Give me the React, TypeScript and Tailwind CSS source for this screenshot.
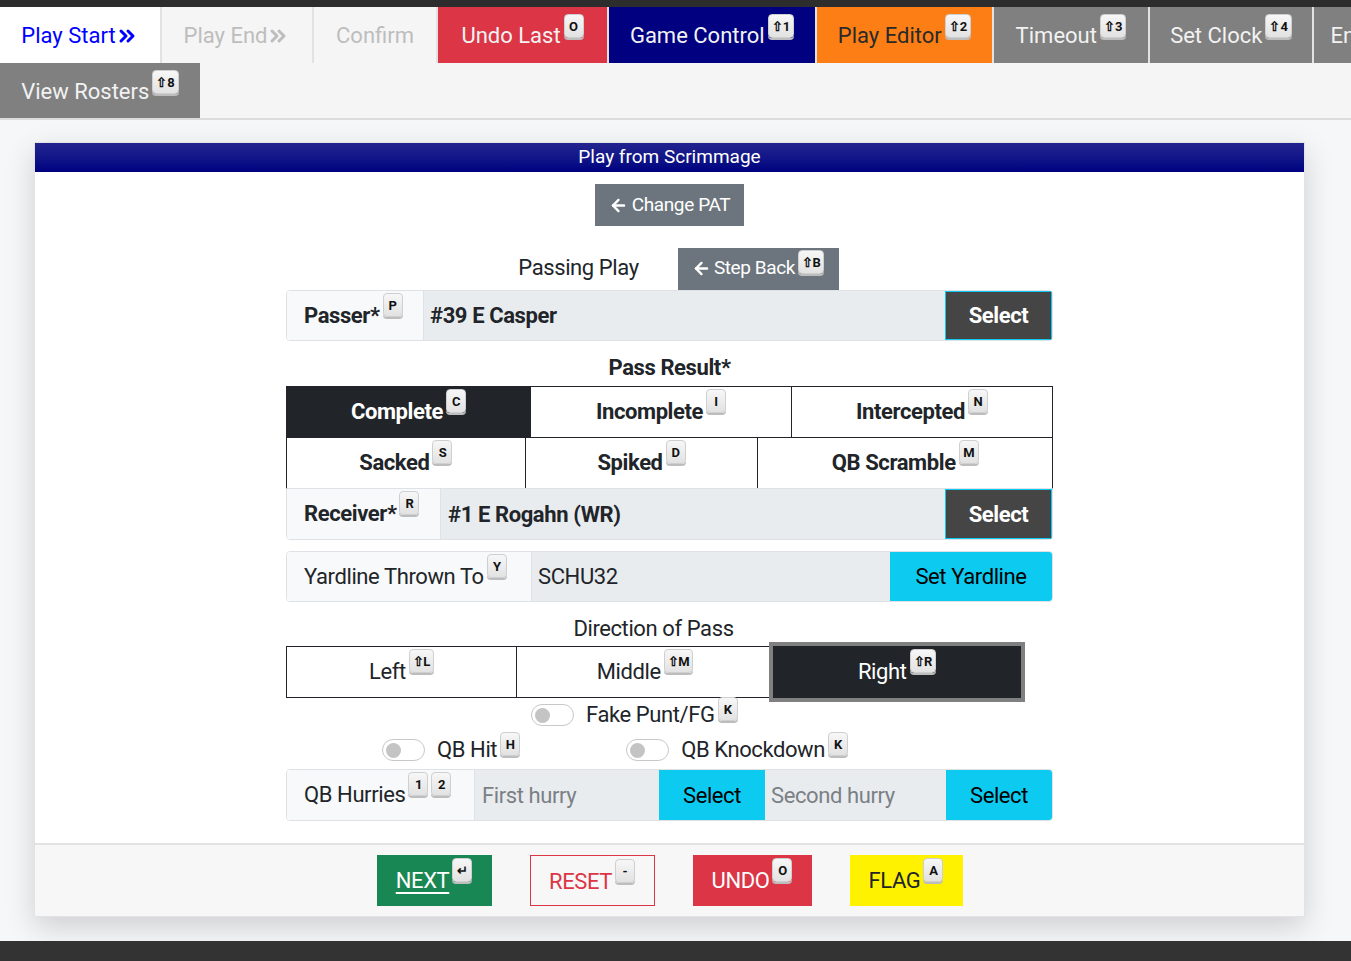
import React from 'react';
import { ChevronsRight, ArrowLeft } from 'lucide-react';

const Kbd: React.FC<{ k: string; className?: string }> = ({ k, className = '' }) => (
    <kbd className={`inline-flex items-center justify-center min-w-[20px] h-[24px] px-[3px] ml-[3px] rounded-[4px] border border-[#cfcfcf] bg-gradient-to-b from-[#f7f7f7] to-[#e2e2e2] shadow-[0_2px_0_#bdbdbd] text-[#111] text-[13px] leading-none font-bold font-['Roboto',sans-serif] align-top ${className}`}>
        {k}
    </kbd>
);

const TABS = [
    { label: 'Play Start', w: 'w-[162px]', bg: 'bg-white', tc: 'text-[#0000ff]', chev: true },
    { label: 'Play End', w: 'w-[152px]', bg: 'bg-[#f5f5f5]', tc: 'text-[#bdbdbd]', chev: true },
    { label: 'Confirm', w: 'w-[124px]', bg: 'bg-[#f5f5f5]', tc: 'text-[#bdbdbd]' },
    { label: 'Undo Last', w: 'w-[171px]', bg: 'bg-[#dc3545]', tc: 'text-[#f2f2f2]', k: 'O' },
    { label: 'Game Control', w: 'w-[208px]', bg: 'bg-[#000080]', tc: 'text-[#f2f2f2]', k: '⇧1' },
    { label: 'Play Editor', w: 'w-[177px]', bg: 'bg-[#fd7e14]', tc: 'text-[#2a2a2a]', k: '⇧2' },
    { label: 'Timeout', w: 'w-[156px]', bg: 'bg-[#808080]', tc: 'text-[#f2f2f2]', k: '⇧3' },
    { label: 'Set Clock', w: 'w-[164px]', bg: 'bg-[#808080]', tc: 'text-[#f2f2f2]', k: '⇧4' },
    { label: 'End Period', w: 'w-[170px]', bg: 'bg-[#808080]', tc: 'text-[#f2f2f2]', k: '⇧5' },
];

const Toggle: React.FC<{ label: string; k: string }> = ({ label, k }) => (
    <div className="flex items-center">
        <span className="w-[43px] h-[22px] rounded-full border border-[#c8c8c8] bg-white flex items-center px-[3px] mr-[12px]">
            <span className="w-[15px] h-[15px] rounded-full bg-[#c4c4c4]" />
        </span>
        <span className="text-[22px] leading-[26px] text-[#212529]">{label}</span>
        <Kbd k={k} className="-mt-[12px]" />
    </div>
);

const App: React.FC = () => {
    return (
        <div className="min-h-[961px] flex flex-col bg-[#f6f7f9] font-['Roboto',sans-serif]">
            <div className="h-[7px] bg-[#2d2d2d]" />

            {/* top nav */}
            <div className="bg-[#f5f5f5] border-b-2 border-[#dcdcdc]">
                <div className="flex overflow-hidden h-[56px]">
                    {TABS.map(t => (
                        <div key={t.label} className={`${t.w} ${t.bg} shrink-0 h-[56px] flex items-start justify-center pt-[6px] border-r-2 border-[#e2e2e2] text-[22px]`}>
                            <span className={`${t.tc} mt-[10px] leading-[26px] flex items-center whitespace-nowrap`}>
                                {t.label}
                                {t.chev && <ChevronsRight size={24} strokeWidth={3} className="-ml-[1px]" />}
                            </span>
                            {t.k && <Kbd k={t.k} className="mt-[1px]" />}
                        </div>
                    ))}
                </div>
                <div className="flex h-[55px]">
                    <div className="w-[200px] h-[55px] flex items-start justify-center pt-[6px] bg-[#808080] text-[#f2f2f2] text-[22px]">
                        <span className="mt-[10px] leading-[26px]">View Rosters</span>
                        <Kbd k="⇧8" className="mt-[1px]" />
                    </div>
                </div>
            </div>

            {/* card */}
            <div className="flex-1 pl-[34px] pt-[22px] pb-[24px]">
                <div className="w-[1271px] bg-white border border-[#e3e3e3] shadow-[0_10px_28px_rgba(0,0,0,0.16)]">
                    <div className="h-[29px] bg-gradient-to-b from-[#23238f] to-[#000080] text-white text-[19px] leading-[27px] text-center">
                        Play from Scrimmage
                    </div>

                    <div className="flex flex-col items-center pt-[12px] pb-[22px] tracking-[-0.4px] text-[#212529]">
                        <button className="h-[42px] w-[149px] bg-[#6c757d] text-white text-[19px] flex items-center justify-center gap-[4px]">
                            <ArrowLeft size={19} strokeWidth={3} /> Change PAT
                        </button>

                        <div className="w-[767px] flex flex-col">
                            <div className="flex items-end justify-center mt-[22px] pl-[18px]">
                                <span className="text-[22px] leading-[26px] mb-[9px] mr-[39px]">Passing Play</span>
                                <button className="h-[42px] w-[161px] bg-[#6c757d] text-white text-[19px] flex items-start justify-center pt-[8px]">
                                    <ArrowLeft size={19} strokeWidth={3} className="mt-[3px] mr-[3px]" />
                                    <span className="leading-[24px]">Step Back</span>
                                    <Kbd k="⇧B" className="-mt-[6px]" />
                                </button>
                            </div>

                            {/* passer */}
                            <div className="flex h-[51px] border border-[#dee2e6] rounded-[4px] overflow-hidden">
                                <div className="w-[137px] bg-[#f8f9fa] border-r border-[#dee2e6] flex items-start pl-[17px] pt-[12px] font-bold text-[22px]">
                                    <span className="leading-[26px]">Passer*</span>
                                    <Kbd k="P" className="-mt-[10px]" />
                                </div>
                                <div className="flex-1 bg-[#e9ecef] flex items-center pl-[6px] font-bold text-[22px]">#39 E Casper</div>
                                <button className="w-[107px] bg-[#454545] border border-[#0dcaf0] text-white font-bold text-[22px]">Select</button>
                            </div>

                            <div className="h-[45px] pt-[14px] text-center font-bold text-[22px] leading-[26px]">Pass Result*</div>

                            {/* result grid */}
                            <div className="flex h-[52px]">
                                {[
                                    { l: 'Complete', k: 'C', w: 'w-[245px]', on: true },
                                    { l: 'Incomplete', k: 'I', w: 'w-[262px]' },
                                    { l: 'Intercepted', k: 'N', w: 'w-[262px]' },
                                ].map((b, i) => (
                                    <div key={b.l} className={`${b.w} ${i > 0 ? '-ml-px' : ''} border border-[#212529] flex items-start justify-center pt-[11px] font-bold text-[22px] ${b.on ? 'bg-[#212529] text-white' : 'bg-white'}`}>
                                        <span className="leading-[26px] mt-[1px]">{b.l}</span>
                                        <Kbd k={b.k} className="-mt-[9px]" />
                                    </div>
                                ))}
                            </div>
                            <div className="flex h-[52px] -mt-px">
                                {[
                                    { l: 'Sacked', k: 'S', w: 'w-[240px]' },
                                    { l: 'Spiked', k: 'D', w: 'w-[234px]' },
                                    { l: 'QB Scramble', k: 'M', w: 'w-[296px]' },
                                ].map((b, i) => (
                                    <div key={b.l} className={`${b.w} ${i > 0 ? '-ml-px' : ''} border border-[#212529] bg-white flex items-start justify-center pt-[11px] font-bold text-[22px]`}>
                                        <span className="leading-[26px] mt-[1px]">{b.l}</span>
                                        <Kbd k={b.k} className="-mt-[9px]" />
                                    </div>
                                ))}
                            </div>

                            {/* receiver */}
                            <div className="flex h-[52px] -mt-px border border-[#dee2e6] rounded-b-[4px] overflow-hidden">
                                <div className="w-[154px] bg-[#f8f9fa] border-r border-[#dee2e6] flex items-start pl-[17px] pt-[12px] font-bold text-[22px]">
                                    <span className="leading-[26px]">Receiver*</span>
                                    <Kbd k="R" className="-mt-[10px]" />
                                </div>
                                <div className="flex-1 bg-[#e9ecef] flex items-center pl-[7px] font-bold text-[22px]">#1 E Rogahn (WR)</div>
                                <button className="w-[107px] bg-[#454545] border border-[#0dcaf0] text-white font-bold text-[22px]">Select</button>
                            </div>

                            {/* yardline */}
                            <div className="flex h-[51px] mt-[11px] border border-[#dee2e6] rounded-[4px] overflow-hidden">
                                <div className="w-[245px] bg-[#f8f9fa] border-r border-[#dee2e6] flex items-start pl-[17px] pt-[12px] text-[22px]">
                                    <span className="leading-[26px]">Yardline Thrown To</span>
                                    <Kbd k="Y" className="-mt-[10px]" />
                                </div>
                                <div className="flex-1 bg-[#e9ecef] flex items-center pl-[6px] text-[22px]">SCHU32</div>
                                <button className="w-[162px] bg-[#0dcaf0] text-black text-[22px]">Set Yardline</button>
                            </div>

                            <div className="w-[735px] h-[44px] pt-[14px] text-center text-[22px] leading-[26px]">Direction of Pass</div>

                            {/* direction */}
                            <div className="flex h-[52px]">
                                <div className="w-[231px] border border-[#212529] bg-white flex items-start justify-center pt-[11px] text-[22px]">
                                    <span className="leading-[26px] mt-[1px]">Left</span>
                                    <Kbd k="⇧L" className="-mt-[9px]" />
                                </div>
                                <div className="w-[258px] -ml-px border border-[#212529] bg-white flex items-start justify-center pt-[11px] text-[22px]">
                                    <span className="leading-[26px] mt-[1px]">Middle</span>
                                    <Kbd k="⇧M" className="-mt-[9px]" />
                                </div>
                                <div className="w-[248px] -ml-px border border-[#212529] bg-[#212529] text-white outline-[4px] outline-solid outline-[#808080] flex items-start justify-center pt-[11px] text-[22px]">
                                    <span className="leading-[26px] mt-[1px]">Right</span>
                                    <Kbd k="⇧R" className="-mt-[9px]" />
                                </div>
                            </div>

                            {/* toggles */}
                            <div className="h-[33px] flex items-center pl-[245px] pt-[1px]">
                                <Toggle label="Fake Punt/FG" k="K" />
                            </div>
                            <div className="h-[38px] flex items-center gap-[106px] pl-[96px]">
                                <Toggle label="QB Hit" k="H" />
                                <Toggle label="QB Knockdown" k="K" />
                            </div>

                            {/* hurries */}
                            <div className="flex h-[52px] border border-[#dee2e6] rounded-[4px] overflow-hidden text-[22px]">
                                <div className="w-[188px] bg-[#f8f9fa] border-r border-[#dee2e6] flex items-start pl-[17px] pt-[12px]">
                                    <span className="leading-[26px]">QB Hurries</span>
                                    <Kbd k="1" className="-mt-[10px]" />
                                    <Kbd k="2" className="-mt-[10px]" />
                                </div>
                                <div className="w-[184px] bg-[#e9ecef] flex items-center pl-[7px] text-[#7b8085]">First hurry</div>
                                <button className="w-[106px] bg-[#0dcaf0] text-black">Select</button>
                                <div className="flex-1 bg-[#e9ecef] flex items-center pl-[6px] text-[#7b8085]">Second hurry</div>
                                <button className="w-[106px] bg-[#0dcaf0] text-black">Select</button>
                            </div>
                        </div>
                    </div>

                    {/* footer */}
                    <div className="bg-[#f7f7f7] border-t-2 border-[#e2e2e2] pt-[10px] pb-[10px] flex justify-center gap-[38px] text-[22px] tracking-[-0.4px]">
                        <button className="w-[115px] h-[51px] bg-[#198754] text-white flex items-start justify-center pt-[12px]">
                            <span className="underline underline-offset-[4px] leading-[26px] mt-[1px]">NEXT</span>
                            <Kbd k="↵" className="-mt-[9px]" />
                        </button>
                        <button className="w-[125px] h-[51px] border border-[#dc3545] text-[#dc3545] flex items-start justify-center pt-[12px]">
                            <span className="leading-[26px] mt-[1px]">RESET</span>
                            <Kbd k="-" className="-mt-[9px]" />
                        </button>
                        <button className="w-[119px] h-[51px] bg-[#dc3545] text-white flex items-start justify-center pt-[12px]">
                            <span className="leading-[26px] mt-[1px]">UNDO</span>
                            <Kbd k="O" className="-mt-[9px]" />
                        </button>
                        <button className="w-[113px] h-[51px] bg-[#fff200] text-[#212529] flex items-start justify-center pt-[12px]">
                            <span className="leading-[26px] mt-[1px]">FLAG</span>
                            <Kbd k="A" className="-mt-[9px]" />
                        </button>
                    </div>
                </div>
            </div>

            <div className="h-[21px] bg-[#333]" />
        </div>
    );
};

export default App;
